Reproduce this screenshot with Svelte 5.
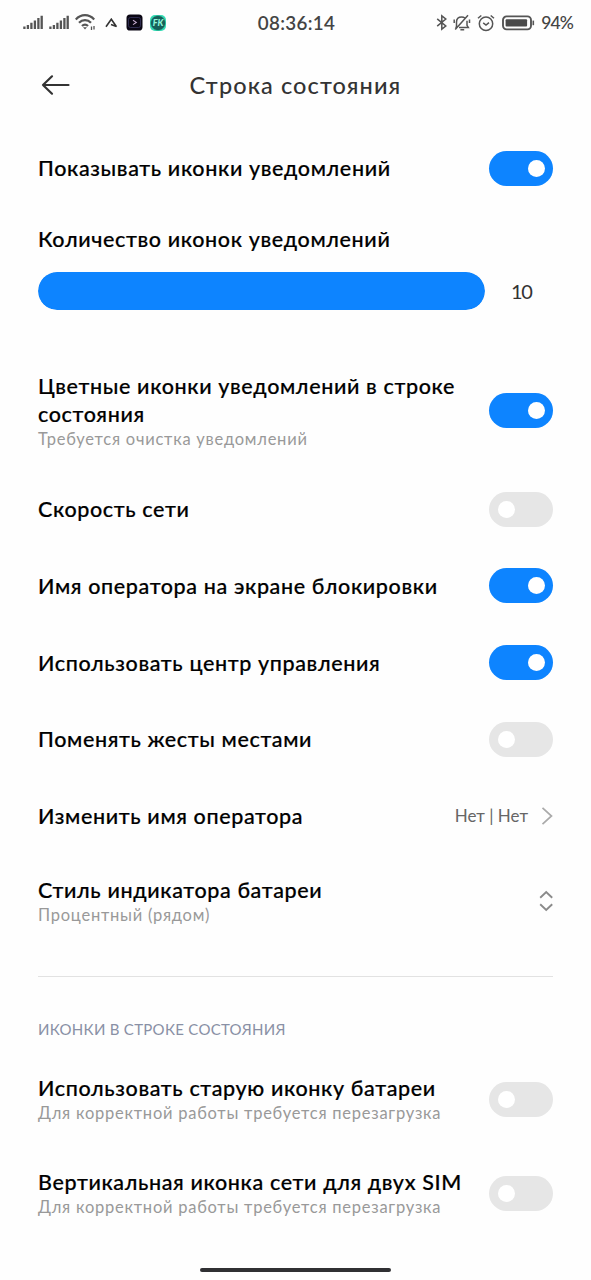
<script>
	let clock = $state('08:36:14');
	let battery = $state(94);
	let iconCount = $state(10);
	let maxIcons = 10;

	let notifications = $state([
		{ title: 'Цветные иконки уведомлений в строке состояния', note: 'Требуется очистка уведомлений', on: true, size: 'large' },
		{ title: 'Скорость сети', on: false },
		{ title: 'Имя оператора на экране блокировки', on: true },
		{ title: 'Использовать центр управления', on: true },
		{ title: 'Поменять жесты местами', on: false }
	]);

	let statusIcons = $state([
		{ title: 'Использовать старую иконку батареи', note: 'Для корректной работы требуется перезагрузка', on: false, size: 'medium' },
		{ title: 'Вертикальная иконка сети для двух SIM', note: 'Для корректной работы требуется перезагрузка', on: false, size: 'medium' }
	]);

	let showIcons = $state({ title: 'Показывать иконки уведомлений', on: true });
</script>

{#snippet signal()}
	<svg class="signal" width="20" height="15" viewBox="0 0 20 15">
		<path d="M1.4 14v-2.4M4.9 14v-4M8.4 14V7.8M11.9 14V5.4M15.4 14V3M18.7 14V.8" stroke="#555" stroke-width="2.3" />
	</svg>
{/snippet}

{#snippet row(item)}
	<div class="row {item.size ?? ''}">
		<div class="label">
			<div class="title">{item.title}</div>
			{#if item.note}
				<div class="note">{item.note}</div>
			{/if}
		</div>
		<button
			class="toggle"
			class:on={item.on}
			role="switch"
			aria-checked={item.on}
			aria-label={item.title}
			onclick={() => (item.on = !item.on)}
		>
			<span class="knob"></span>
		</button>
	</div>
{/snippet}

<div class="screen">
	<div class="status">
		<div class="status-left">
			{@render signal()}
			{@render signal()}
			<svg class="wifi" width="21" height="17" viewBox="0 0 21 17" fill="none" stroke="#555" stroke-width="2.2">
				<path d="M.8 5.4C6-.2 14-.2 19.2 5.4M4 8.8c3.4-3.6 8.6-3.6 12 0M7 12c1.8-1.9 4.2-1.9 6 0" />
				<path d="M8 13.2h4l-2 2.3z" fill="#555" stroke="none" />
				<path d="M16.5 16v-3.6M19 12v3.6" stroke-width="1.3" />
			</svg>
			<svg class="caret" width="13" height="10" viewBox="0 0 13 10" fill="none" stroke="#333" stroke-width="1.6">
				<path d="M1 8.8 6.3 1.2l5.2 7.6M6 6.6l5.5 2" />
			</svg>
			<svg class="app" width="17" height="17" viewBox="0 0 17 17">
				<rect x=".5" y=".5" width="16" height="16" rx="3.6" fill="#0b0714" />
				<rect x="2.5" y="3.5" width="12" height="10" rx="2" fill="none" stroke="#39375f" stroke-width=".8" />
				<path d="m7 6.2 3.3 2.2L7 10.6" fill="none" stroke="#c3aacb" stroke-width="1.1" />
			</svg>
			<div class="fk">FK</div>
		</div>
		<div class="clock">{clock}</div>
		<div class="status-right">
			<svg width="12" height="17" viewBox="0 0 12 17" fill="none" stroke="#555" stroke-width="1.5">
				<path d="m1.2 4.8 8.6 7.2L5.8 15.2V1.8L9.8 5 1.2 12.2" />
			</svg>
			<svg class="bell" width="18" height="17" viewBox="0 0 18 17" fill="none" stroke="#555" stroke-width="1.5">
				<path d="M3.5 12.8V8c0-3 2-5 5.2-5 1.3 0 2.4.4 3.3 1M14 6.8v4.6l1.3 2H6M2.3 13.4h1.6M7.4 15.8h3.8M2.2 15.4 15 1.2M1.2 5.5v3.6M16.5 5.5v3.6" />
			</svg>
			<svg class="alarm" width="18" height="18" viewBox="0 0 18 18" fill="none" stroke="#555" stroke-width="1.5">
				<circle cx="9" cy="9.8" r="6.7" />
				<path d="M1 4.3 4.3 1.5M13.7 1.5 17 4.3M6.2 8.8 9 11l3-2.4" />
			</svg>
			<svg class="battery" width="33" height="16" viewBox="0 0 33 16">
				<rect x="1" y="1.4" width="28" height="13" rx="3.6" fill="none" stroke="#555" stroke-width="1.9" />
				<rect x="3.6" y="4.2" width="21.5" height="7.4" rx="1" fill="#4a4a4a" />
				<path d="M31.3 5.6v4.6" stroke="#555" stroke-width="1.6" />
			</svg>
			<span class="percent">{battery}%</span>
		</div>
	</div>

	<header>
		<button class="back" aria-label="Назад">
			<svg width="30" height="22" viewBox="0 0 30 22" fill="none" stroke="#333" stroke-width="2.2" stroke-linecap="round" stroke-linejoin="round">
				<path d="M27.5 11H2M11 2.3 2 11l9 8.7" />
			</svg>
		</button>
		<h1>Строка состояния</h1>
	</header>

	<main>
		{@render row(showIcons)}

		<div class="count">
			<div class="title">Количество иконок уведомлений</div>
			<div class="slider">
				<div class="track">
					<div class="fill" style:width="{(iconCount / maxIcons) * 100}%"></div>
				</div>
				<span class="value">{iconCount}</span>
			</div>
		</div>

		{#each notifications as item}
			{@render row(item)}
		{/each}

		<div class="row">
			<div class="title">Изменить имя оператора</div>
			<div class="choice">
				<span>Нет | Нет</span>
				<svg width="12" height="20" viewBox="0 0 12 20" fill="none" stroke="#aaa" stroke-width="1.7">
					<path d="m1.5 1.8 9 8.2-9 8.2" />
				</svg>
			</div>
		</div>

		<div class="row medium">
			<div class="label">
				<div class="title">Стиль индикатора батареи</div>
				<div class="note">Процентный (рядом)</div>
			</div>
			<svg width="14" height="22" viewBox="0 0 14 22" fill="none" stroke="#8a8a8a" stroke-width="1.9">
				<path d="m1.2 7.7 6-5.6 6 5.6M1.2 14.3l6 5.6 6-5.6" />
			</svg>
		</div>

		<hr />
		<h2>ИКОНКИ В СТРОКЕ СОСТОЯНИЯ</h2>

		{#each statusIcons as item}
			{@render row(item)}
		{/each}
	</main>

	<div class="home"></div>
</div>

<style>
	:global(body) {
		background-color: #fefefe;
	}

	.screen {
		width: 591px;
		height: 1280px;
		display: flex;
		flex-direction: column;
		overflow: hidden;
		box-sizing: border-box;
		padding-bottom: 8px;
		font-family: Lato, 'Open Sans', sans-serif;
		color: #000;
	}

	button {
		border: none;
		padding: 0;
		background: none;
		cursor: pointer;
	}

	svg {
		display: block;
		flex-shrink: 0;
	}

	.status {
		height: 45px;
		flex-shrink: 0;
		display: grid;
		grid-template-columns: 1fr auto 1fr;
		align-items: center;
		padding: 0 18px 0 23px;
		box-sizing: border-box;
		color: #444;
	}

	.status-left,
	.status-right {
		display: flex;
		align-items: center;
	}

	.status-right {
		justify-content: flex-end;
	}

	.signal {
		margin-right: 6px;
	}

	.wifi {
		margin-right: 9px;
	}

	.caret {
		margin-right: 8px;
	}

	.app {
		margin-right: 7px;
	}

	.fk {
		width: 16px;
		height: 16px;
		border-radius: 5px;
		background: radial-gradient(circle, #16605a 58%, #35dcb4 70%);
		color: #8ff5dc;
		font-size: 9px;
		font-weight: 900;
		font-style: italic;
		line-height: 16px;
		text-align: center;
	}

	.clock {
		margin-right: 3px;
		font-size: 18.8px;
		line-height: 24px;
		font-weight: 600;
		letter-spacing: 0.3px;
	}

	.bell {
		margin-left: 5px;
	}

	.alarm {
		margin-left: 6px;
	}

	.battery {
		margin-left: 7px;
	}

	.percent {
		margin: 0 0 1px 6px;
		font-size: 17.5px;
		font-weight: 500;
		letter-spacing: -0.9px;
	}

	header {
		height: 85px;
		flex-shrink: 0;
		display: grid;
		grid-template-columns: 30px 1fr 30px;
		align-items: center;
		padding: 0 41px 6px;
		box-sizing: border-box;
	}

	h1 {
		margin: 0;
		font-size: 23.5px;
		font-weight: 500;
		letter-spacing: 1.1px;
		text-align: center;
		color: #333;
	}

	main {
		flex: 1;
		padding: 0 38px;
	}

	.row {
		height: 76.6px;
		display: flex;
		align-items: center;
		justify-content: space-between;
	}

	.row.medium {
		height: 94px;
	}

	.row.large {
		height: 121px;
	}

	.label {
		max-width: 440px;
	}

	.title {
		font-size: 21.5px;
		font-weight: 500;
		line-height: 28px;
		letter-spacing: 0.63px;
		-webkit-text-stroke: 0.2px #000;
	}

	.note {
		font-size: 16.5px;
		line-height: 22px;
		letter-spacing: 0.75px;
		color: #999;
	}

	.toggle {
		width: 64px;
		height: 35px;
		flex-shrink: 0;
		display: flex;
		align-items: center;
		padding: 0 8.5px;
		border-radius: 18px;
		background: #e6e6e6;
	}

	.toggle.on {
		justify-content: flex-end;
		background: #0d84ff;
	}

	.knob {
		width: 17px;
		height: 17px;
		border-radius: 50%;
		background: #fff;
	}

	.count {
		height: 143.5px;
		padding-top: 18px;
		box-sizing: border-box;
	}

	.slider {
		display: flex;
		align-items: center;
		margin-top: 19px;
	}

	.track {
		width: 447px;
		height: 38px;
		flex-shrink: 0;
		border-radius: 19px;
		overflow: hidden;
		background: #eee;
	}

	.fill {
		height: 100%;
		border-radius: 19px;
		background: #0d84ff;
	}

	.value {
		margin-left: 26px;
		font-size: 20px;
		letter-spacing: -1.4px;
		color: #333;
	}

	.choice {
		display: flex;
		align-items: center;
		gap: 13px;
		font-size: 17px;
		color: #666;
	}

	hr {
		height: 1px;
		margin: 28px 0 0;
		border: none;
		background: #e2e2e2;
	}

	h2 {
		margin: 41px 0 12px;
		font-size: 15px;
		font-weight: 400;
		line-height: 22px;
		letter-spacing: 0.28px;
		color: #8990a5;
	}

	.home {
		width: 191px;
		height: 4px;
		flex-shrink: 0;
		margin: 0 auto;
		border-radius: 2px;
		background: #303033;
	}
</style>
